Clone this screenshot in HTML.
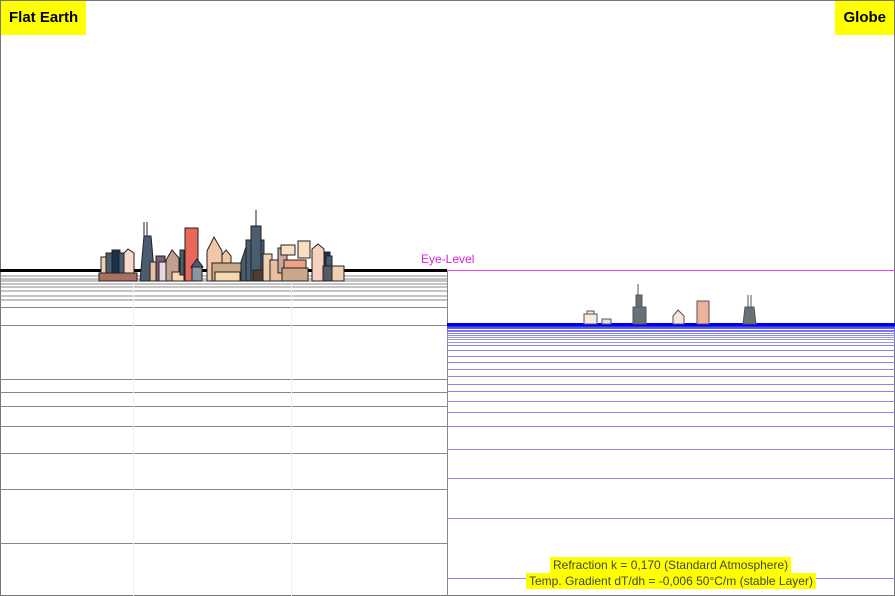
<!DOCTYPE html>
<html><head><meta charset="utf-8"><style>
html,body{margin:0;padding:0;background:#fff;width:895px;height:596px;overflow:hidden;font-family:"Liberation Sans",Arial,sans-serif}
.lab{position:absolute;background:#ffff00;font-weight:bold;font-size:15px;color:#000;padding:0 8px;height:34px;line-height:34px;top:1px}
.info{position:absolute;background:#ffff00;font-size:12px;color:#444;line-height:16px;padding:0 3px}
</style></head><body>
<svg width="895" height="596" style="position:absolute;left:0;top:0">
<rect x="0.5" y="0.5" width="894" height="595" fill="none" stroke="#777"/>
<g stroke="#888" stroke-width="1">
<line x1="0" y1="276" x2="447" y2="276"/><line x1="0" y1="279" x2="447" y2="279"/>
<line x1="0" y1="281" x2="447" y2="281"/><line x1="0" y1="284" x2="447" y2="284"/>
<line x1="0" y1="287" x2="447" y2="287"/><line x1="0" y1="291" x2="447" y2="291"/>
<line x1="0" y1="296" x2="447" y2="296"/><line x1="0" y1="300" x2="447" y2="300"/>
<line x1="0" y1="307.5" x2="447" y2="307.5"/><line x1="0" y1="325.5" x2="447" y2="325.5"/>
<line x1="0" y1="379.5" x2="447" y2="379.5"/><line x1="0" y1="392.5" x2="447" y2="392.5"/>
<line x1="0" y1="406.5" x2="447" y2="406.5"/><line x1="0" y1="426.5" x2="447" y2="426.5"/>
<line x1="0" y1="453.5" x2="447" y2="453.5"/><line x1="0" y1="489.5" x2="447" y2="489.5"/>
<line x1="0" y1="543.5" x2="447" y2="543.5"/>
</g>
<g stroke="#f0f0f0"><line x1="133.5" y1="272" x2="133.5" y2="596"/><line x1="291.5" y1="272" x2="291.5" y2="596"/></g>
<rect x="0" y="269" width="447" height="3" fill="#000"/>
<line x1="447.5" y1="270" x2="447.5" y2="596" stroke="#888"/>
<g stroke="#222" stroke-width="1">
<rect x="101" y="257" width="10" height="24" fill="#f0d0b0"/>
<rect x="106" y="253" width="9" height="28" fill="#4a5d70"/>
<rect x="112" y="250" width="8" height="31" fill="#1c3048"/>
<rect x="119" y="253" width="6" height="28" fill="#4a5d70"/>
<polygon points="124,253 128,249 134,253 134,281 124,281" fill="#f8d8c8"/>
<rect x="99" y="273" width="38" height="8" fill="#a87060"/>
<polygon points="140,281 144,236 151,236 155,281" fill="#4a5d70"/>
<line x1="144" y1="236" x2="144" y2="222"/><line x1="147" y1="236" x2="147" y2="222"/>
<rect x="150" y="262" width="9" height="19" fill="#e8c0a0"/>
<rect x="156" y="256" width="9" height="25" fill="#786070"/>
<rect x="159" y="262" width="7" height="19" fill="#e8d8e0"/>
<polygon points="166,260 172,250 179,258 179,281 166,281" fill="#c0a090"/>
<rect x="172" y="272" width="12" height="9" fill="#f8d8b0"/>
<rect x="180" y="250" width="4" height="25" fill="#4a5d70"/>
<rect x="185" y="228" width="13" height="53" fill="#e8685c"/>
<polygon points="191,267 197,259 203,267 197,273" fill="#4a5d70"/>
<rect x="192" y="267" width="10" height="14" fill="#8a96a0"/>
<polygon points="207,251 214,237 222,251 222,281 207,281" fill="#f0c8a8"/>
<polygon points="222,255 226,250 231,256 231,281 222,281" fill="#f0c8a8"/>
<rect x="212" y="263" width="30" height="18" fill="#c8a888"/>
<rect x="215" y="272" width="25" height="9" fill="#f8d8b0"/>
<polygon points="241,262 246,247 251,262 251,281 241,281" fill="#4a5d70"/>
<rect x="246" y="240" width="18" height="41" fill="#4a5d70"/>
<rect x="251" y="226" width="10" height="55" fill="#4a5d70"/>
<line x1="256" y1="226" x2="256" y2="210"/>
<rect x="253" y="270" width="12" height="11" fill="#503c30"/>
<rect x="263" y="254" width="9" height="27" fill="#f0d0b0"/>
<rect x="270" y="260" width="12" height="21" fill="#e8c0a0"/>
<rect x="278" y="248" width="9" height="25" fill="#c8a8a0"/>
<rect x="281" y="245" width="14" height="10" fill="#f8e0c0"/>
<rect x="284" y="260" width="22" height="21" fill="#f0a088"/>
<rect x="298" y="241" width="12" height="17" fill="#f8e0c0"/>
<rect x="282" y="268" width="26" height="13" fill="#c8a888"/>
<polygon points="312,249 318,244 324,249 324,281 312,281" fill="#f8d0c0"/>
<rect x="324" y="252" width="6" height="29" fill="#1c3048"/>
<rect x="326" y="256" width="6" height="25" fill="#4a5d70"/>
<rect x="323" y="266" width="10" height="15" fill="#555a66"/>
<rect x="332" y="266" width="12" height="15" fill="#f0d0b0"/>
</g>
<line x1="447" y1="270.5" x2="895" y2="270.5" stroke="#ee44ee"/>
<g stroke="#8888ee" stroke-width="1">
<line x1="447" y1="345.5" x2="895" y2="345.5"/><line x1="447" y1="350.5" x2="895" y2="350.5"/>
<line x1="447" y1="356.5" x2="895" y2="356.5"/><line x1="447" y1="362.5" x2="895" y2="362.5"/>
<line x1="447" y1="369.5" x2="895" y2="369.5"/><line x1="447" y1="376.5" x2="895" y2="376.5"/>
<line x1="447" y1="384.5" x2="895" y2="384.5"/><line x1="447" y1="391.5" x2="895" y2="391.5"/>
<line x1="447" y1="401.5" x2="895" y2="401.5"/><line x1="447" y1="412.5" x2="895" y2="412.5"/>
<line x1="447" y1="426.5" x2="895" y2="426.5"/><line x1="447" y1="449.5" x2="895" y2="449.5"/>
<line x1="447" y1="478.5" x2="895" y2="478.5"/><line x1="447" y1="518.5" x2="895" y2="518.5"/>
<line x1="447" y1="578.5" x2="895" y2="578.5"/>
</g>
<g stroke-width="1">
<line x1="447" y1="326.5" x2="895" y2="326.5" stroke="#3030ee"/>
<line x1="447" y1="327.5" x2="895" y2="327.5" stroke="#5050ee"/>
<line x1="447" y1="328.5" x2="895" y2="328.5" stroke="#6060ee"/>
<line x1="447" y1="330.5" x2="895" y2="330.5" stroke="#7070ee"/>
<line x1="447" y1="331.5" x2="895" y2="331.5" stroke="#8080ee"/>
<line x1="447" y1="333.5" x2="895" y2="333.5" stroke="#8888ee"/>
<line x1="447" y1="335.5" x2="895" y2="335.5" stroke="#9090ee"/>
<line x1="447" y1="337.5" x2="895" y2="337.5" stroke="#9898ee"/>
<line x1="447" y1="339.5" x2="895" y2="339.5" stroke="#9898ee"/>
<line x1="447" y1="342.5" x2="895" y2="342.5" stroke="#9898ee"/>
</g>
<rect x="447" y="323" width="448" height="3" fill="#0000ee"/>
<g stroke="#555" stroke-width="1">
<rect x="584" y="314" width="13" height="10" fill="#f8ece0"/><rect x="587" y="311" width="7" height="3" fill="#f8ece0"/>
<rect x="602" y="319" width="9" height="5" fill="#e8e0e0"/>
<rect x="633" y="307" width="13" height="17" fill="#6a7078"/><rect x="636" y="295" width="6" height="12" fill="#6a7078"/>
<line x1="638" y1="295" x2="638" y2="284"/>
<polygon points="673,324 673,316 678,310 684,316 684,324" fill="#f8e4d8"/>
<rect x="697" y="301" width="12" height="23" fill="#f0b0a0"/>
<polygon points="743,324 745,307 754,307 756,324" fill="#6a7078"/>
<line x1="748" y1="307" x2="748" y2="295"/><line x1="751" y1="307" x2="751" y2="295"/>
</g>
<text x="421" y="263" font-size="12" fill="#dd22dd" font-family="Liberation Sans,sans-serif">Eye-Level</text>
</svg>
<div class="lab" style="left:1px">Flat Earth</div>
<div class="lab" style="right:1px">Globe</div>
<div class="info" style="left:550px;top:557px">Refraction k = 0,170 (Standard Atmosphere)</div>
<div class="info" style="left:526px;top:573px">Temp. Gradient dT/dh = -0,006 50°C/m (stable Layer)</div>
</body></html>
